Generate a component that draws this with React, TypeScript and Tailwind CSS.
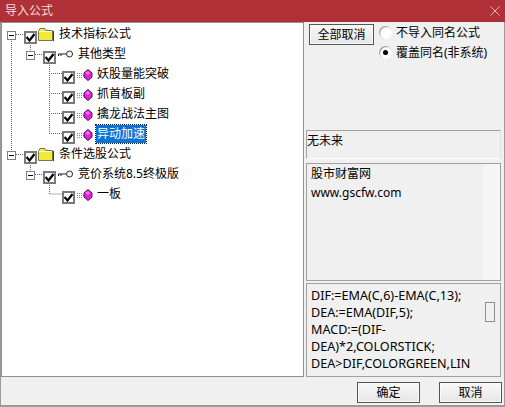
const FONT = "font-['Noto_Sans','Noto_Sans_CJK_SC',sans-serif]";

interface RowProps {
  indent: number;
  label: string;
  kind: "folder" | "key" | "gem";
  selected?: boolean;
  expander?: boolean;
}

const ROWS: RowProps[] = [
  { indent: 0, label: "技术指标公式", kind: "folder", expander: true },
  { indent: 19, label: "其他类型", kind: "key", expander: true },
  { indent: 38, label: "妖股量能突破", kind: "gem" },
  { indent: 38, label: "抓首板副", kind: "gem" },
  { indent: 38, label: "擒龙战法主图", kind: "gem" },
  { indent: 38, label: "异动加速", kind: "gem", selected: true },
  { indent: 0, label: "条件选股公式", kind: "folder", expander: true },
  { indent: 19, label: "竞价系统8.5终极版", kind: "key", expander: true },
  { indent: 38, label: "一板", kind: "gem" },
];

function Folder() {
  return (
    <svg width="16" height="13" viewBox="0 0 16 13" className="shrink-0">
      <path d="M0.5 3.5 L2 0.5 H7 L8 2.5 H14.5 V12.5 H0.5 Z" fill="#f2ea3a" stroke="#77774a" />
      <path d="M1 3.5 H14" stroke="#fffde0" />
      <path d="M15.5 3 V13" stroke="#333" />
    </svg>
  );
}

function KeyIcon() {
  return (
    <svg width="16" height="8" viewBox="0 0 16 8" className="ml-[1px] shrink-0">
      <circle cx="11.5" cy="4" r="3" fill="#fff" stroke="#222" />
      <path d="M8 4 H0.5 V6 M3 4 V6" fill="none" stroke="#222" />
    </svg>
  );
}

function GemIcon() {
  return (
    <svg width="17" height="12" viewBox="0 0 17 12" className="mt-[2px] shrink-0">
      <path d="M1 4.5 H7 M1 6.5 H8 M1 8.5 H7" stroke="#8a8a8a" strokeDasharray="1 1" />
      <path d="M12 0.5 L16 4 V8 L12 11.5 L8 8 V4 Z" fill="#e81fd8" stroke="#3a1a5a" />
      <path d="M9 4 L12 2 L14 4 L12 6 Z" fill="#ff6cf0" />
    </svg>
  );
}

function Check() {
  return (
    <span className="mt-[6px] flex h-[13px] w-[13px] shrink-0 items-center justify-center border-2 border-[#7a7a7a] bg-white">
      <svg width="9" height="9" viewBox="0 0 9 9">
        <path d="M0.5 4 L3.5 7.5 L8.5 1" fill="none" stroke="#000" strokeWidth="2.2" />
      </svg>
    </span>
  );
}

function Expander() {
  return (
    <span className="mt-[2px] flex h-[9px] w-[9px] shrink-0 items-center justify-center border border-[#808080] bg-white">
      <span className="h-px w-[5px] bg-black" />
    </span>
  );
}

function TreeRow({ indent, label, kind, selected, expander }: RowProps) {
  return (
    <div className="flex h-[20px] items-center" style={{ paddingLeft: indent }}>
      <span className="flex w-[17px] shrink-0 items-center">{expander && <Expander />}</span>
      <Check />
      <span className="ml-[1px] flex w-[19px] shrink-0 items-center">
        {kind === "folder" && <Folder />}
        {kind === "key" && <KeyIcon />}
        {kind === "gem" && <GemIcon />}
      </span>
      <span
        className={`ml-[1px] px-[1px] text-[12px] leading-[18px] whitespace-nowrap ${
          selected ? "bg-[#0c74d6] text-white outline-1 outline-dotted outline-[#222]" : "text-black"
        }`}
      >
        {label}
      </span>
    </div>
  );
}

function TreeLines() {
  return (
    <svg width="120" height="200" className="absolute top-0 left-0" fill="none" stroke="#666" strokeDasharray="1 1">
      <path d="M4.5 15 V129 M9 10.5 H17 M23.5 19 V26 M28 30.5 H36 M42.5 39 V110 M42 49.5 H55 M42 69.5 H55 M42 89.5 H55 M42 109.5 H55" />
      <path d="M9 130.5 H17 M23.5 139 V146 M28 150.5 H36 M42.5 159 V170 H55" />
    </svg>
  );
}

function Radio({ checked }: { checked?: boolean }) {
  return (
    <span className="flex h-[13px] w-[13px] shrink-0 items-center justify-center rounded-full bg-white shadow-[inset_1px_1px_1px_#999]">
      {checked && <span className="h-[5px] w-[5px] rounded-full bg-black" />}
    </span>
  );
}

function WinButton({ label, className }: { label: string; className: string }) {
  return (
    <button
      type="button"
      className={`shrink-0 border border-[#555] bg-gradient-to-b from-[#f8f8f8] to-[#e6e6e6] text-[12px] text-black shadow-[inset_0_0_0_1px_#fafafa] ${className}`}
    >
      {label}
    </button>
  );
}

export default function App() {
  return (
    <div className={`flex h-[407px] w-[505px] flex-col overflow-hidden bg-[#f0f0f0] ${FONT}`}>
      <div className="flex h-[22px] shrink-0 items-center justify-between bg-[#b03037] pr-[5px] pl-[5px] text-[12px] text-[#f4dcdc]">
        <span>导入公式</span>
        <svg width="10" height="10" viewBox="0 0 10 10" stroke="#f0d8d8" strokeWidth="0.8">
          <path d="M0.5 0.5 L9.5 9.5 M9.5 0.5 L0.5 9.5" />
        </svg>
      </div>

      <div className="flex min-h-0 flex-1 flex-col border-x border-b-2 border-[#9a9a9a]">
        <div className="flex h-[355px] shrink-0">
          <div className="h-full w-[303px] shrink-0 border border-[#8f8f8f] bg-white pt-[1px] pl-[5px]">
            <div className="relative">
              <TreeLines />
              <div className="relative">
                {ROWS.map((row) => (
                  <TreeRow key={row.label} {...row} />
                ))}
              </div>
            </div>
          </div>

          <div className="flex min-w-0 flex-1 flex-col pt-[2px] pr-[3px] pl-[2px]">
            <div className="flex h-[106px] shrink-0 pl-[3px]">
              <WinButton label="全部取消" className="h-[21px] w-[65px]" />
              <div className="ml-[5px] flex flex-col gap-[3px] text-[12px] leading-[17px] text-black">
                <div className="flex items-center gap-[4px]">
                  <Radio />
                  <span>不导入同名公式</span>
                </div>
                <div className="flex items-center gap-[4px]">
                  <Radio checked />
                  <span>覆盖同名(非系统)</span>
                </div>
              </div>
            </div>

            <div className="h-[29px] shrink-0 border border-[#a0a0a0] border-r-[#e0e0e0] border-b-white text-[12px] leading-[19px] text-black">
              无未来
            </div>

            <div className="mt-[4px] flex h-[118px] shrink-0 border border-[#a0a0a0] text-[12px] text-black">
              <div className="flex-1 pl-[4px] leading-[19px]">
                <p>股市财富网</p>
                <p>www.gscfw.com</p>
              </div>
              <div className="w-[17px] bg-[#f5f5f5]" />
            </div>

            <div className="mt-[2px] flex h-[94px] shrink-0 border border-[#a0a0a0] text-[12.6px] text-black">
              <div className="w-[173px] shrink-0 pt-[3px] pl-[4px] leading-[17px] whitespace-nowrap">
                <p>DIF:=EMA(C,6)-EMA(C,13);</p>
                <p>DEA:=EMA(DIF,5);</p>
                <p>MACD:=(DIF-</p>
                <p>DEA)*2,COLORSTICK;</p>
                <p>DEA&gt;DIF,COLORGREEN,LIN</p>
              </div>
              <div className="flex-1 pt-[18px] pl-[5px]">
                <div className="h-[20px] w-[10px] border border-[#8f8f8f] bg-[#f0f0f0]" />
              </div>
            </div>
          </div>
        </div>

        <div className="flex flex-1 justify-end gap-[19px] pt-[5px] pr-[2px]">
          <WinButton label="确定" className="h-[21px] w-[63px]" />
          <WinButton label="取消" className="h-[21px] w-[63px]" />
        </div>
      </div>
    </div>
  );
}
